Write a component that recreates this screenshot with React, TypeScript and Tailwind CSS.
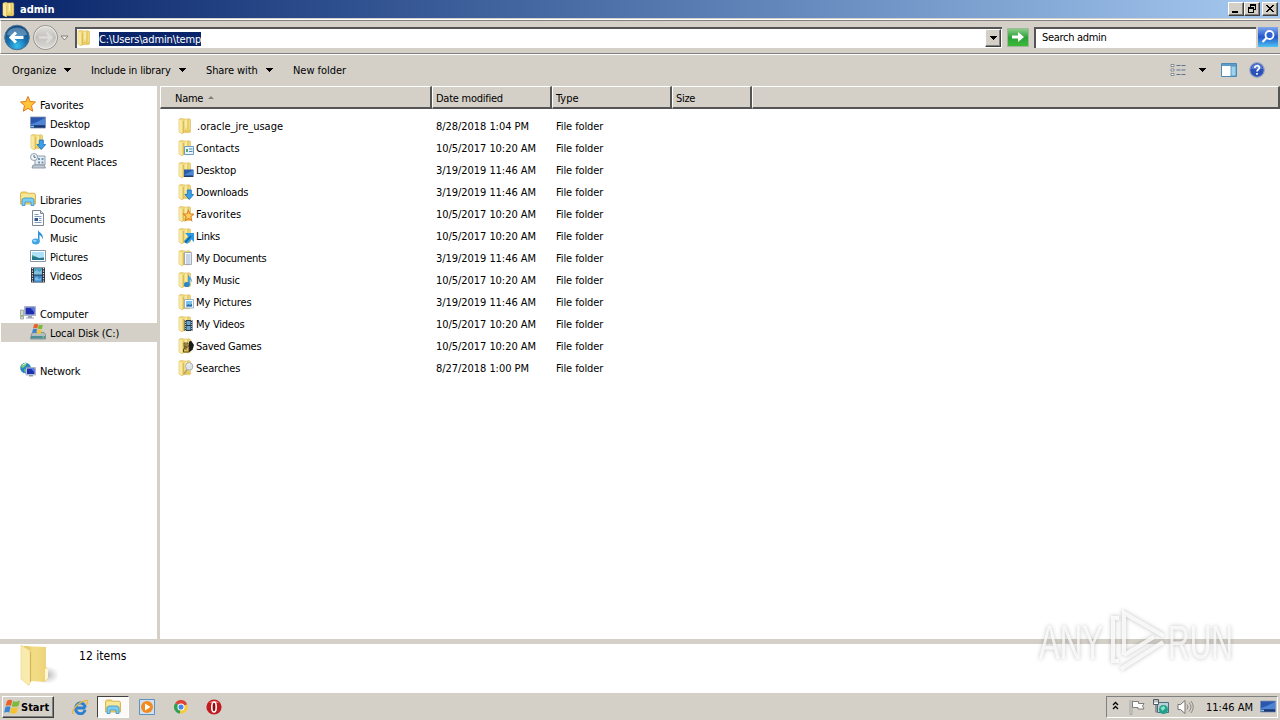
/** Explorer window (classic theme) with nav pane, file list and taskbar. */

import type { ReactNode } from "react";

interface NavEntry {
  label: string;
  icon: string;
  child?: boolean;
  selected?: boolean;
}

interface FileEntry {
  name: string;
  icon: string;
  modified: string;
  tracking?: string;
}

const navGroups: NavEntry[][] = [
  [
    { label: "Favorites", icon: "star" },
    { label: "Desktop", icon: "desktop", child: true },
    { label: "Downloads", icon: "downloads", child: true },
    { label: "Recent Places", icon: "recent", child: true },
  ],
  [
    { label: "Libraries", icon: "library" },
    { label: "Documents", icon: "document", child: true },
    { label: "Music", icon: "music", child: true },
    { label: "Pictures", icon: "picture", child: true },
    { label: "Videos", icon: "video", child: true },
  ],
  [
    { label: "Computer", icon: "computer" },
    { label: "Local Disk (C:)", icon: "disk", child: true, selected: true },
  ],
  [{ label: "Network", icon: "network" }],
];

const files: FileEntry[] = [
  { name: ".oracle_jre_usage", icon: "folder", modified: "8/28/2018 1:04 PM", tracking: "pl-px tracking-normal" },
  { name: "Contacts", icon: "f-contacts", modified: "10/5/2017 10:20 AM", tracking: "tracking-normal" },
  { name: "Desktop", icon: "f-desktop", modified: "3/19/2019 11:46 AM" },
  { name: "Downloads", icon: "downloads", modified: "3/19/2019 11:46 AM", tracking: "tracking-[-0.25px]" },
  { name: "Favorites", icon: "f-star", modified: "10/5/2017 10:20 AM", tracking: "tracking-[0.08px]" },
  { name: "Links", icon: "f-links", modified: "10/5/2017 10:20 AM", tracking: "tracking-[-0.3px]" },
  { name: "My Documents", icon: "f-docs", modified: "3/19/2019 11:46 AM", tracking: "tracking-[-0.3px]" },
  { name: "My Music", icon: "f-music", modified: "10/5/2017 10:20 AM", tracking: "tracking-[-0.25px]" },
  { name: "My Pictures", icon: "f-pictures", modified: "3/19/2019 11:46 AM" },
  { name: "My Videos", icon: "f-videos", modified: "10/5/2017 10:20 AM", tracking: "tracking-[-0.22px]" },
  { name: "Saved Games", icon: "f-games", modified: "10/5/2017 10:20 AM", tracking: "tracking-[-0.28px]" },
  { name: "Searches", icon: "f-search", modified: "8/27/2018 1:00 PM", tracking: "tracking-[-0.12px]" },
];

const starPath = "M8 .5l2.2 5 5.3.5-4 3.6 1.2 5.600L8 12.3l-4.700 2.900 1.200-5.600-4-3.600 5.300-.500z";

function FolderShape() {
  return (
    <>
      <path d="M1 1.200L4.500 0l1.200 1H10l.5-.5 2 1V14l-1.500.800L5.500 14.500 4.500 16 1 14z" fill="#f0d878" stroke="#d6b95c" strokeWidth=".6" />
      <path d="M1.200 1.500L4.800 3v12.500L1.200 14z" fill="#f8e99e" />
      <path d="M5.200 3v12" stroke="#d0ae42" strokeWidth=".9" />
      <path d="M6 2h6v12H6z" fill="#f1da7c" />
      <path d="M8 1.500v8" stroke="#fcf5c6" strokeWidth="1.200" />
      <path d="M10 1.500v12" stroke="#dcbd50" strokeWidth=".8" />
      <path d="M6 12h6v2H6z" fill="#e8c95e" />
    </>
  );
}

const overlays: Record<string, ReactNode> = {
  "f-contacts": (
    <>
      <path d="M6.500 6.500h9v8h-9z" fill="#eaf4fb" stroke="#6d9cc4" />
      <path d="M8 9h2v3H8z" fill="#5aa36e" />
      <path d="M11 9h3.500M11 11.500h3.500" stroke="#4d86b8" />
    </>
  ),
  "f-desktop": (
    <>
      <path d="M6 7.500h9.500V14H6z" fill="#2b5da8" />
      <path d="M6 13l9.500-5v5z" fill="#4b86cf" />
      <path d="M6 14.500h9.500" stroke="#213b66" />
    </>
  ),
  downloads: (
    <path d="M9.300 6h4v4.500h2.400l-4.400 5-4.400-5h2.400z" fill="#39a0ea" stroke="#1a6fb5" strokeWidth=".8" />
  ),
  "f-star": (
    <path
      d="M10.500 4.500l1.400 3.300 3.700.3-2.700 2.500.8 4-3.200-2.100-3.200 2.100.8-4-2.700-2.500 3.700-.3z"
      fill="#ffce5e"
      stroke="#dd8424"
      strokeWidth="1.100"
    />
  ),
  "f-links": (
    <>
      <path d="M7 5h9v9l-2.500-2.500L9 16l-3-3 4.500-4.500z" fill="#2a9be0" />
      <path d="M7 14.500l6-6.500" stroke="#0c62ab" strokeWidth="1.500" />
    </>
  ),
  "f-docs": (
    <>
      <path d="M6.500 2.500h7v12h-7z" fill="#f7f9fb" stroke="#8d99a8" strokeWidth=".8" />
      <path d="M8 5h4.500M8 7h4.500M8 9h4.500M8 11h4.500M8 13h4.500" stroke="#7d9fca" strokeWidth=".8" />
    </>
  ),
  "f-music": (
    <>
      <path d="M10 2c.5 3 5 4 4 9-.3-2.500-1.500-3.500-2.200-3.800V13H10z" fill="#3f9fdc" />
      <ellipse cx="8.800" cy="12.500" rx="2.900" ry="2.600" fill="#2b86c8" />
    </>
  ),
  "f-pictures": (
    <>
      <path d="M6.500 5.500h9v8.500h-9z" fill="#f5fafd" stroke="#8aa5bd" strokeWidth=".8" />
      <path d="M8 7h6v5.500H8z" fill="#7cc0ec" />
      <path d="M8 12.500l2-2.500 2 1 2-1v2.500z" fill="#2b6ba5" />
    </>
  ),
  "f-videos": (
    <>
      <path d="M6.500 4h8v11h-8z" fill="#2b3440" />
      <path d="M8.500 5h4v4h-4zM8.500 10h4v4h-4z" fill="#63a6c9" />
      <path d="M7.500 4v11M13.600 4v11" stroke="#d4dde4" strokeWidth=".8" strokeDasharray="1 1" />
    </>
  ),
  "f-games": (
    <>
      <path d="M11 3.500h1l1-1L16 7l-1.500 5-3.500 2z" fill="#1d1b1a" />
      <path d="M6 5h4v3h1v6H5.500v-3h1z" fill="#e1be53" stroke="#3a3120" strokeWidth=".8" />
      <path d="M7 9h3M8 6v6" stroke="#3a3120" strokeWidth=".8" />
    </>
  ),
  "f-search": (
    <>
      <path d="M9 9.500l-3 4.500" stroke="#b3a36a" strokeWidth="1.600" />
      <circle cx="11.200" cy="6.500" r="3.700" fill="#dde3e4" stroke="#a3aaac" strokeWidth=".9" />
      <path d="M9 5.500a3 3 0 0 1 3-1.800" stroke="#fff" fill="none" />
    </>
  ),
};

const drawings: Record<string, ReactNode> = {
  star: <path d={starPath} fill="#ffc43a" stroke="#e0781e" strokeWidth="1" />,
  desktop: (
    <>
      <path d="M.500 2h15v11H.500z" fill="#2a56ae" stroke="#7d93b5" strokeWidth=".8" />
      <path d="M1 9C6 8 10 5 15 3v7H1z" fill="#4d84d6" />
      <path d="M1 11.500h14" stroke="#1c3668" strokeWidth="2" />
      <path d="M1 11.500h3" stroke="#8fc2ee" strokeWidth="1.500" />
    </>
  ),
  recent: (
    <>
      <path d="M5 3h10v9H5z" fill="#e6ecf0" stroke="#8495a5" strokeWidth=".9" />
      <path d="M3 12h11l1.500 3H2z" fill="#c3ccd4" stroke="#7c8a98" strokeWidth=".8" />
      <path d="M8 5h2v2H8zM11.500 5h2v2h-2zM8 8.500h2v2H8zM11.500 8.500h2v2h-2z" fill="#6f93b9" />
      <circle cx="4" cy="4" r="3.500" fill="#f4f7fa" stroke="#8696a8" strokeWidth=".9" />
      <path d="M4 2v2.300h1.800" stroke="#44617f" fill="none" strokeWidth=".9" />
    </>
  ),
  library: (
    <>
      <path d="M.500 2.500L1.500 1h5l1 1.200h7l1 1.300V13H.500z" fill="#f2da72" stroke="#cfa93d" strokeWidth=".8" />
      <path d="M1.500 4h13M1.500 6h13" stroke="#fbf3bd" strokeWidth="1.200" />
      <path d="M2 8.500L4 7h8l2 1.500v6h-3V11H5v3.500H2z" fill="#7ccdf2" stroke="#3a8fc6" strokeWidth=".8" />
    </>
  ),
  document: (
    <>
      <path d="M2.500.500h8l3 3v12h-11z" fill="#fbfcfe" stroke="#7d8793" />
      <path d="M10.500.500v3h3" fill="#d5e1ee" stroke="#7d8793" />
      <path d="M4.500 4.500h4M4.500 6.500h7M9 8.500h2.500M9 10.500h2.500M4.500 12.500h7" stroke="#7f9cbb" />
      <path d="M4.500 8h3.500v3H4.500z" fill="#31568e" />
    </>
  ),
  music: (
    <>
      <path d="M8 .500c.5 3.500 6.500 4 4.500 10C12 7.500 10.500 6.500 9.500 6v7H8z" fill="#2f93d4" />
      <ellipse cx="5.800" cy="12.500" rx="3.900" ry="2.900" fill="#3fa5e3" />
      <ellipse cx="4.800" cy="11.800" rx="1.800" ry="1.100" fill="#9bd8f8" />
    </>
  ),
  picture: (
    <>
      <path d="M.500 2.500h15v11H.500z" fill="#fff" stroke="#8697a6" />
      <path d="M2 4h12v8H2z" fill="#aee0f7" />
      <path d="M2 8l3 .500 4 1.500 5-.500V12H2z" fill="#25768f" />
      <path d="M2 7l4 2H2z" fill="#3e9a70" />
    </>
  ),
  video: (
    <>
      <path d="M1 .500h14v15H1z" fill="#27313d" />
      <path d="M4 1h8v6.500H4z" fill="#4e9fc0" />
      <path d="M4 8.500h8V15H4z" fill="#3f86c9" />
      <path d="M4 5l3-2 2 2 3-2v4.500H4zM5 11l2-1.500 2 3 2-2v3H5z" fill="#94cfe8" opacity=".7" />
      <path d="M2.500 1v14M13.500 1v14" stroke="#e5eaee" strokeWidth="1.200" strokeDasharray="1.300 1.200" />
    </>
  ),
  computer: (
    <>
      <path d="M.500 5h3v9h-3z" fill="#cfd6cf" stroke="#8b968c" strokeWidth=".7" />
      <path d="M1.200 10h1.500v2H1.200z" fill="#6cbc55" />
      <path d="M4.500 1.500h11v9h-11z" fill="#d8dde6" stroke="#8c97ad" strokeWidth=".7" />
      <path d="M5.500 2.500h9v7h-9z" fill="#1d2db0" />
      <path d="M10 2.500h4.500v5z" fill="#5571e2" />
      <path d="M8 11h4v1.500h2v1H6v-1h2z" fill="#98a3b5" />
    </>
  ),
  disk: (
    <>
      <path d="M1.500 10L3 8.500h11l1.500 2v4.500H.500z" fill="#b3bec3" stroke="#6d7b80" strokeWidth=".7" />
      <path d="M1 12h14v2.500H1z" fill="#4d8f94" />
      <path d="M12.500 13h1.500" stroke="#95f07c" strokeWidth="1.200" />
      <path d="M4 .500c1.500-1 3-.5 4.200 0L7.300 4.500c-1.500-.6-2.800-.6-4.200 0z" fill="#e9602c" />
      <path d="M8.700.700c1.500.5 2.800.6 4.200 0L12 4.700c-1.400.5-2.800.4-4.200 0z" fill="#7eb93c" />
      <path d="M2.900 5.200c1.500-.7 2.800-.5 4.200 0L6.200 9.200c-1.400-.6-2.700-.6-4.200 0z" fill="#3c83cf" />
      <path d="M7.600 5.400c1.500.5 2.800.6 4.200.1L10.900 9.500c-1.400.5-2.800.4-4.200 0z" fill="#f6c330" />
    </>
  ),
  network: (
    <>
      <circle cx="5.500" cy="6" r="5.300" fill="#2485c0" />
      <path d="M2 2.500c2-2 4-2 5-1.500L5.500 4 3 6 1 5zM4 7l3 1-2 3z" fill="#77cc72" />
      <path d="M2.500 3.500A4 4 0 0 1 6 1.500" stroke="#c7efff" fill="none" />
      <path d="M6 5.500h9.500V13H6z" fill="#cfd6e4" stroke="#8390aa" strokeWidth=".6" />
      <path d="M7 6.500h7.500V12H7z" fill="#1c30b4" />
      <path d="M11 6.500h3.500v4z" fill="#5b7bea" />
      <path d="M9 13h4v1.500H9z" fill="#8994a8" />
    </>
  ),
};

function Icon({ name, className = "size-4" }: { name: string; className?: string }) {
  return (
    <svg viewBox="0 0 16 16" className={`shrink-0 ${className}`}>
      {drawings[name] ?? (
        <>
          <FolderShape />
          {overlays[name]}
        </>
      )}
    </svg>
  );
}

function Caret({ className = "" }: { className?: string }) {
  return (
    <svg viewBox="0 0 8 4" className={`h-1 w-2 shrink-0 ${className}`} shapeRendering="crispEdges">
      <path d="M0 0h8L4 4z" fill="#000" />
    </svg>
  );
}

function CaptionButton({ children }: { children: ReactNode }) {
  return (
    <div className="flex h-[14px] w-4 items-center justify-center border border-t-white border-r-[#404040] border-b-[#404040] border-l-white bg-[#d4d0c8] shadow-[inset_-1px_-1px_0_#808080]">
      <svg viewBox="0 0 12 10" className="h-[10px] w-3" shapeRendering="crispEdges">
        {children}
      </svg>
    </div>
  );
}

function TitleBar() {
  return (
    <div className="flex h-[18px] items-center bg-linear-to-r from-[#0a246a] to-[#a6caf0] pr-0.5 pl-0.5">
      <Icon name="folder" className="size-[15px]" />
      <span className="ml-[3px] flex-1 pt-px font-['DejaVu_Sans_Condensed','DejaVu_Sans',sans-serif] text-[11px] leading-[14px] font-bold text-white">
        admin
      </span>
      <CaptionButton>
        <path d="M2 7h6v2H2z" />
      </CaptionButton>
      <CaptionButton>
        <path d="M4 0h6v2H4zM4 2h1v2H4zM9 2h1v4H9zM8 5h1v1H8zM2 3h6v2H2zM2 5h1v4H2zM7 5h1v4H7zM2 8h6v1H2z" />
      </CaptionButton>
      <div className="ml-0.5">
        <CaptionButton>
          <path d="M2 1h2v1h1v1h2V2h1V1h2v1H9v1H8v1H7v1h1v1h1v1h1v1H8V7H7V6H5v1H4v1H2V7h1V6h1V5h1V4H4V3H3V2H2z" />
        </CaptionButton>
      </div>
    </div>
  );
}

function NavButtons() {
  return (
    <svg viewBox="0 0 72 30" className="h-[30px] w-[72px] shrink-0">
      <defs>
        <radialGradient id="back" cx=".5" cy=".85" r=".8">
          <stop offset="0" stopColor="#35c0ee" />
          <stop offset=".5" stopColor="#1770b0" />
          <stop offset="1" stopColor="#104a80" />
        </radialGradient>
        <linearGradient id="fwd" x2="0" y2="1">
          <stop offset="0" stopColor="#e3e1dc" />
          <stop offset=".5" stopColor="#c3c1bd" />
          <stop offset="1" stopColor="#dedcd8" />
        </linearGradient>
      </defs>
      <circle cx="16" cy="15.500" r="12.300" fill="url(#back)" stroke="#52718e" />
      <path d="M5.500 12.500a11 10 0 0 1 21 0q-10 4-21 0z" fill="#fff" opacity=".28" />
      <path d="M22.500 15.500H11M15 10.500l-5 5 5 5" fill="none" stroke="#fff" strokeWidth="3" />
      <circle cx="44.500" cy="15.500" r="12" fill="url(#fwd)" stroke="#8f8d89" />
      <circle cx="44.500" cy="15.500" r="11" fill="none" stroke="#f2f1ee" strokeWidth=".8" />
      <path d="M38 15.500h11M45.500 10.500l5 5-5 5" fill="none" stroke="#dddbd7" strokeWidth="2.500" />
      <path d="M60 14h7l-3.500 4z" fill="#f1f0ed" stroke="#777" strokeWidth=".9" />
    </svg>
  );
}

function AddressRow() {
  return (
    <div className="mt-0.5 flex h-[34px] items-center border-t border-b border-l border-t-[#808080] border-b-[#808080] border-l-white shadow-[0_1px_0_#fff,0_-1px_0_#fff]">
      <NavButtons />
      <div className="ml-0.5 flex h-[21px] w-[927px] items-center border-t-2 border-l-2 border-t-[#555] border-l-[#555] bg-white pr-px">
        <Icon name="folder" />
        <span className="mt-0.5 ml-[6px] h-[14px] w-[102px] bg-[#0a246a] text-[11px] leading-[15px] tracking-[-0.14px] whitespace-nowrap text-white">
          C:\Users\admin\temp
        </span>
        <div className="ml-auto flex h-[18px] w-4 items-center justify-center border border-t-white border-r-[#404040] border-b-[#404040] border-l-white bg-[#d4d0c8] shadow-[inset_-1px_-1px_0_#808080]">
          <Caret />
        </div>
      </div>
      <svg viewBox="0 0 22 19" className="ml-[5px] h-[19px] w-[22px]">
        <defs>
          <linearGradient id="go" x2="0" y2="1">
            <stop offset="0" stopColor="#8fd08c" />
            <stop offset=".5" stopColor="#2ba238" />
            <stop offset="1" stopColor="#3cbb38" />
          </linearGradient>
        </defs>
        <path d="M.500.500h21v18H.500z" fill="url(#go)" stroke="#9fb79b" />
        <path d="M5 7.500h6V4l6 5-6 5v-3.500H5z" fill="#fff" />
      </svg>
      <div className="ml-[5px] flex h-[21px] w-[222px] items-center border-t-2 border-l-2 border-t-[#555] border-l-[#555] bg-white pl-1.5 text-[11px] tracking-[-0.3px]">
        Search admin
      </div>
      <svg viewBox="0 0 20 20" className="ml-0.5 size-5">
        <defs>
          <linearGradient id="find" x2="0" y2="1">
            <stop offset="0" stopColor="#7fa8ee" />
            <stop offset=".5" stopColor="#2456cc" />
            <stop offset="1" stopColor="#4fc3f2" />
          </linearGradient>
        </defs>
        <path d="M0 0h20v20H0z" fill="url(#find)" />
        <circle cx="11.500" cy="8" r="4" fill="#2d62d4" stroke="#fff" strokeWidth="1.800" />
        <path d="M8.500 11l-4 4" stroke="#fff" strokeWidth="2.200" />
      </svg>
    </div>
  );
}

function Toolbar() {
  return (
    <div className="flex h-[31px] items-center pt-px pl-3 text-[11px]">
      <span className="w-[51px] pt-0.5">Organize</span>
      <Caret />
      <span className="ml-5 w-[87px] pt-0.5 tracking-[-0.2px] whitespace-nowrap">Include in library</span>
      <Caret />
      <span className="ml-5 w-[59px] pt-0.5 tracking-[-0.1px] whitespace-nowrap">Share with</span>
      <Caret />
      <span className="ml-5 pt-0.5 tracking-[-0.03px]">New folder</span>
      <svg viewBox="0 0 16 14" className="mr-[-1px] ml-auto h-[14px] w-4">
        <path d="M1 1.500h3v2H1zM1 6h3v2H1zM1 10.500h3v2H1z" fill="#fff" stroke="#6d7480" strokeWidth=".8" />
        <path d="M6.500 2.500h4M11.500 2.500h4M6.500 7h4M11.500 7h4M6.500 11.500h4M11.500 11.500h4" stroke="#5c7090" />
      </svg>
      <Caret className="ml-[13px]" />
      <svg viewBox="0 0 16 14" className="ml-[15px] h-[14px] w-4">
        <path d="M.500.500h15v13H.500z" fill="#fff" stroke="#4e88b5" />
        <path d="M1 1h14v2H1z" fill="#5b9ccb" />
        <path d="M10 3h5v10h-5z" fill="#9bd4ef" stroke="#4e88b5" strokeWidth=".8" />
      </svg>
      <svg viewBox="0 0 16 16" className="mr-[15px] ml-3 size-4">
        <circle cx="8" cy="8" r="7.300" fill="#2a52b8" stroke="#9aa6c4" strokeWidth="1.200" />
        <path d="M2.500 7a5.500 5 0 0 1 11 0z" fill="#7c9ce4" opacity=".6" />
        <path d="M5.800 6c0-3 4.600-3 4.600-.2C10.400 7.500 8 7.500 8 9.500M8 11v1.800" fill="none" stroke="#fff" strokeWidth="1.700" />
      </svg>
    </div>
  );
}

function NavPane() {
  return (
    <div className="flex w-[157px] flex-col gap-[19px] bg-white pt-[9px] pl-px">
      {navGroups.map((group, i) => (
        <div key={i}>
          {group.map((entry) => (
            <div
              key={entry.label}
              className={`flex h-[19px] items-center text-[11px] whitespace-nowrap ${entry.child ? "pl-[29px]" : "pl-[19px]"} ${entry.selected ? "bg-[#d4d0c8]" : ""}`}
            >
              <Icon name={entry.icon} className="mb-px size-4" />
              <span className="ml-1 pt-[3px] tracking-[-0.13px]">{entry.label}</span>
            </div>
          ))}
        </div>
      ))}
    </div>
  );
}

function HeaderCell({ className, children }: { className: string; children?: ReactNode }) {
  return (
    <div
      className={`flex h-[23px] items-center border-t border-r-2 border-b-2 border-l border-t-white border-r-[#555] border-b-[#555] border-l-white pt-1 ${className}`}
    >
      {children}
    </div>
  );
}

function FileList() {
  return (
    <div className="flex-1 bg-white text-[11px]">
      <div className="flex bg-[#d4d0c8]">
        <HeaderCell className="w-[272px] pl-[14px] tracking-[-0.25px]">
          Name
          <svg viewBox="0 0 6 3" className="mb-1 ml-[5px] h-[3px] w-1.5">
            <path d="M0 3h6L3 0z" fill="#858178" />
          </svg>
        </HeaderCell>
        <HeaderCell className="w-[120px] pl-[3px] tracking-[-0.25px]">Date modified</HeaderCell>
        <HeaderCell className="w-[120px] pl-[3px]">Type</HeaderCell>
        <HeaderCell className="w-[80px] pl-[3px] tracking-[-0.3px]">Size</HeaderCell>
        <HeaderCell className="flex-1" />
      </div>
      <div className="pt-[6px]">
        {files.map((file) => (
          <div key={file.name} className="flex h-[22px] items-center whitespace-nowrap">
            <div className="flex w-[276px] items-center pl-[18px]">
              <Icon name={file.icon} className="mb-px size-4" />
              <span className={`ml-[2px] pt-px leading-4 ${file.tracking ?? "tracking-[-0.1px]"}`}>{file.name}</span>
            </div>
            <span className="w-[120px] pt-px leading-4 tracking-[-0.05px]">{file.modified}</span>
            <span className="pt-px leading-4 tracking-[-0.1px]">File folder</span>
          </div>
        ))}
      </div>
    </div>
  );
}

function DetailsPane() {
  return (
    <div className="flex h-[48px] bg-white">
      <svg viewBox="0 0 40 44" className="ml-5 h-[44px] w-10">
        <defs>
          <linearGradient id="big" x2="1" y2="0">
            <stop offset="0" stopColor="#dcb94f" />
            <stop offset=".4" stopColor="#f3dd86" />
            <stop offset="1" stopColor="#ecd27a" />
          </linearGradient>
          <radialGradient id="shade">
            <stop offset="0" stopColor="#999" stopOpacity=".7" />
            <stop offset="1" stopColor="#aaa" stopOpacity="0" />
          </radialGradient>
        </defs>
        <ellipse cx="27" cy="31" rx="12" ry="9" fill="url(#shade)" />
        <path d="M3 2L26 3v20l2 2v10l-3 3-15-1z" fill="url(#big)" />
        <path d="M1 1l8 5q1 1 1 3v30q0 3-2 2l-7-6z" fill="#f9eaae" stroke="#ead586" strokeWidth=".6" />
        <path d="M10.500 8v30" stroke="#d6b458" strokeWidth="1" />
        <path d="M25 25q3-2 3 1v8l-3 3z" fill="#fff7d6" />
      </svg>
      <span className="mt-[3px] ml-[19px] text-[12px] tracking-[0.02px]">12 items</span>
    </div>
  );
}

function Watermark() {
  return (
    <svg
      viewBox="0 0 210 80"
      className="absolute top-[602px] left-[1030px] h-20 w-[210px] overflow-visible drop-shadow-[0_0_2px_#00000050]"
    >
      <g fill="#fff" fillOpacity=".75" fontFamily="Liberation Sans, sans-serif" fontSize="49">
        <text x="9" y="57" textLength="64" lengthAdjust="spacingAndGlyphs">
          ANY
        </text>
        <text x="138" y="57" textLength="65" lengthAdjust="spacingAndGlyphs">
          RUN
        </text>
      </g>
      <g fill="none" stroke="#fff" strokeOpacity=".8" strokeWidth="4">
        <path d="M89 16h-6v43h6" />
        <path d="M94 53V11l40 23M94 53l30-18M91 67l42-27" />
      </g>
    </svg>
  );
}

function Taskbar() {
  return (
    <div className="flex h-7 items-center border-t border-t-white bg-[#d4d0c8]">
      <div className="ml-0.5 flex h-[22px] w-[52px] items-center border border-t-white border-r-[#404040] border-b-[#404040] border-l-white pl-px shadow-[inset_-1px_-1px_0_#808080]">
        <svg viewBox="0 0 16 16" className="size-4 shrink-0">
          <path d="M3 2q2.800-2 5.200-.5L7 6.800Q4.500 5.500 1.600 7z" fill="#e8602a" />
          <path d="M9 2q3.200 1.500 7-.5L14.500 7q-3.200 1.500-6.700.2z" fill="#7db93d" />
          <path d="M1.400 8q2.600-1.500 5.200-.2L5.300 13.500Q3 12.200.100 13.700z" fill="#3b86d2" />
          <path d="M7.500 8.200q3.200 1.300 6.600 0L12.500 14q-3.200 1.400-6.400.1z" fill="#f5c22d" />
        </svg>
        <span className="ml-px pt-[3px] font-['DejaVu_Sans_Condensed','DejaVu_Sans',sans-serif] text-[11px] font-bold">
          Start
        </span>
      </div>
      <svg viewBox="0 0 18 16" className="ml-[17px] h-4 w-[18px]">
        <path
          d="M14.500 9H5.500M4.800 9.500a4.600 4.800 0 0 1 9.400-1M14 11a4.700 4.700 0 0 1-9.200-2"
          fill="none"
          stroke="#2c7fd0"
          strokeWidth="3"
        />
        <path d="M3 14.500C-1 15.500 4 4 15 1.500c3-.5 1.500 3 0 4.500" fill="none" stroke="#e9b83e" strokeWidth="1.300" />
      </svg>
      <div className="ml-2 flex h-[22px] w-8 items-center justify-center border border-t-[#404040] border-r-white border-b-white border-l-[#404040] bg-[#fbfaf8]">
        <Icon name="library" className="mt-px size-4" />
      </div>
      <svg viewBox="0 0 16 16" className="ml-[10px] size-4">
        <path d="M.500.500h15v15H.500z" fill="#cfe2f3" stroke="#5d91c2" />
        <circle cx="8" cy="8" r="6" fill="#f28a1d" />
        <path d="M6 4.500l5.500 3.500L6 11.500z" fill="#fff" />
      </svg>
      <svg viewBox="0 0 16 16" className="ml-[19px] size-[14px]">
        <path d="M8 8L1.500 3.500A7.500 7.500 0 0 1 15 5z" fill="#dc4437" />
        <path d="M8 8L1.500 3.500A7.500 7.500 0 0 0 7 15.500z" fill="#31a150" />
        <path d="M8 8l7-3a7.500 7.500 0 0 1-8 10.500z" fill="#f8ca3a" />
        <circle cx="8" cy="8" r="3.500" fill="#4585ee" stroke="#fff" strokeWidth="1.200" />
      </svg>
      <svg viewBox="0 0 16 16" className="ml-[18px] size-4">
        <circle cx="8" cy="8" r="7.600" fill="#c11a20" />
        <path d="M3 4a6 5 0 0 1 10 0z" fill="#e8706c" />
        <ellipse cx="8" cy="8" rx="2.200" ry="5" fill="#8c0e12" stroke="#fff" strokeWidth="1.600" />
      </svg>
      <div className="mr-0.5 ml-auto flex h-[22px] w-[172px] items-center border border-t-[#808080] border-r-white border-b-white border-l-[#808080]">
        <svg viewBox="0 0 7 9" className="mb-0.5 ml-[5px] h-[9px] w-[7px]">
          <path d="M1 4l2.500-2.500L6 4M1 8l2.500-2.500L6 8" fill="none" stroke="#000" strokeWidth="1.300" />
        </svg>
        <svg viewBox="0 0 16 16" className="ml-[10px] size-4">
          <path d="M2 1v14.500" stroke="#7b7b7b" strokeWidth="2.500" />
          <path d="M2 1v14" stroke="#fff" strokeWidth="1" />
          <path d="M3.500 2.500h6v2h5.500l-1.500 2.500 1.500 3H9V8.500H3.500z" fill="#fff" stroke="#77736d" strokeWidth=".9" />
        </svg>
        <svg viewBox="0 0 16 16" className="ml-2 size-4">
          <path d="M4.500 3.500h11v10h-11z" fill="#b9d0d9" stroke="#4e6d7d" />
          <circle cx="10.500" cy="10.500" r="4.500" fill="#20a08a" />
          <path d="M7.500 9l3-2 2 2-3 3z" fill="#8be3c5" />
          <path d="M.500.500h5v5h-5zM3 5.500v8" fill="#fff" stroke="#515a61" />
          <path d="M2 1v2.500M4 1v2.500" stroke="#515a61" strokeWidth=".8" />
        </svg>
        <svg viewBox="0 0 17 16" className="ml-2 h-4 w-[17px]">
          <path d="M1 5.500h2.500L8 1.500v13L3.500 10.500H1z" fill="#fff" stroke="#77736d" />
          <path d="M10 5.500q2 2.500 0 5M12 3.500q4 4.500 0 9M14 2q4.500 6 0 12" fill="none" stroke="#85817b" strokeWidth=".9" />
        </svg>
        <span className="ml-3 w-[54px] pt-[3px] text-[11px] whitespace-nowrap">11:46 AM</span>
        <Icon name="desktop" />
      </div>
    </div>
  );
}

export default function App() {
  return (
    <div className="relative flex h-[720px] w-[1280px] flex-col overflow-hidden bg-[#d4d0c8] font-['DejaVu_Sans_Condensed','Noto_Sans',sans-serif] text-black">
      <TitleBar />
      <AddressRow />
      <Toolbar />
      <div className="mt-px flex h-[553px]">
        <NavPane />
        <div className="w-[3px]" />
        <FileList />
      </div>
      <div className="h-[5px] shrink-0" />
      <DetailsPane />
      <Taskbar />
      <Watermark />
    </div>
  );
}
